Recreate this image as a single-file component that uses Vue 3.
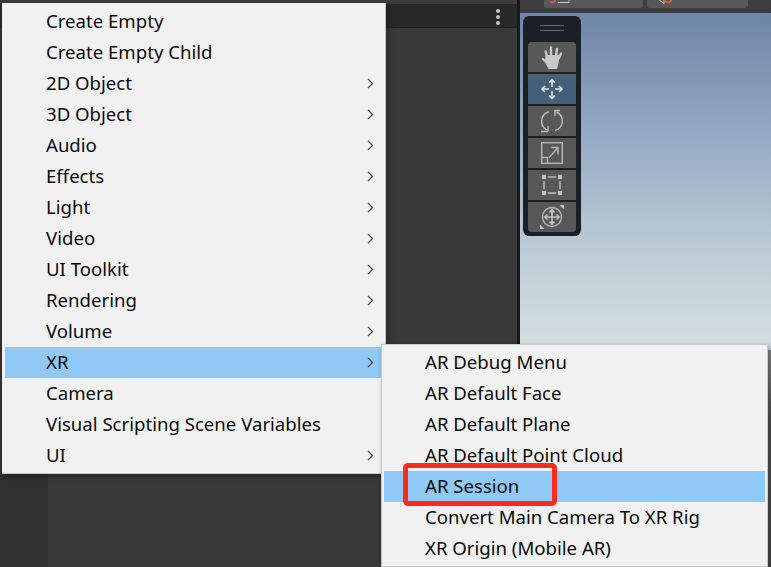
<template>
  <div class="editor">
    <!-- hierarchy panel behind the menu -->
    <div class="panel">
      <div class="panel-top"></div>
      <div class="panel-head">
        <span class="dots"><i></i><i></i><i></i></span>
      </div>
      <div class="panel-body"><div class="indent"></div></div>
    </div>

    <!-- scene view -->
    <div class="scene">
      <div class="scene-bar">
        <div class="bar-btn first">
          <svg width="24" height="5" viewBox="0 0 24 5"><circle cx="2" cy="-1" r="3.5" fill="none" stroke="#e8633a" stroke-width="1.6"/><path d="M8 2.5H19V-2" fill="none" stroke="#c8c8c8"/></svg>
        </div>
        <div class="bar-btn second">
          <svg width="28" height="5" viewBox="0 0 28 5"><path d="M3 -1L9 3.5V-1" fill="none" stroke="#c8c8c8"/><circle cx="13" cy="-1" r="3.5" fill="none" stroke="#e8633a" stroke-width="1.6"/></svg>
        </div>
      </div>
      <div class="scene-view">
        <div class="sky"></div>
        <div class="ground"></div>

        <div class="tools">
          <div class="grip"><i></i><i></i></div>
          <div v-for="(t, idx) in tools" :key="t" class="tool" :class="[{ active: t === 'move' }, idx === 0 ? 'top' : '', idx === tools.length - 1 ? 'last' : '']">
            <svg v-if="t === 'hand'" width="22" height="23" viewBox="0 0 22 23">
              <path d="M6 10L4.6 5.5M10 10V1.5M15 10L16 3M18 12L20 7.5M7 18L2 13" fill="none" stroke="#c9c9c9" stroke-width="2.4" stroke-linecap="round"/>
              <path d="M4.5 9H19L17.5 17L16 23H7.5L4 16Z" fill="#c9c9c9"/>
            </svg>
            <svg v-else-if="t === 'move'" width="24" height="24" viewBox="0 0 24 24" fill="none" stroke="#e6e9ec" stroke-width="1.5">
              <path d="M12 4V10M12 14V21M2 12H9M15 12H22"/>
              <path d="M9.2 5.8L12 2.8L14.8 5.8M9.2 18.6L12 21.6L14.8 18.6M5 9L2 12L5 15M19 9L22 12L19 15"/>
            </svg>
            <svg v-else-if="t === 'rotate'" width="24" height="24" viewBox="0 0 24 24" fill="none" stroke="#bdbdbd" stroke-width="1.4">
              <path d="M9 2.8A9.8 9.8 0 0 0 7 21"/>
              <path d="M15 21.4A9.8 9.8 0 0 0 16.5 3"/>
              <path d="M14 1.5H20M15 1.5V7M1 22.5H8M8 17V22.5"/>
            </svg>
            <svg v-else-if="t === 'scale'" width="24" height="24" viewBox="0 0 24 24" fill="none" stroke="#b4b4b4" stroke-width="1.4">
              <rect x="1.7" y="1.7" width="20.6" height="20.6"/>
              <path d="M1.7 16.5H7.5V22.3M9 16.7L18 6.5M11.5 6.5H18V13.5"/>
            </svg>
            <svg v-else-if="t === 'rect'" width="20" height="20" viewBox="0 0 20 20">
              <path d="M6 2H14M6 18H14M2 6V14M18 6V14" stroke="#bdbdbd" stroke-width="1.5" fill="none"/>
              <path d="M0 0H4V4H0ZM16 0H20V4H16ZM0 16H4V20H0ZM16 16H20V20H16Z" fill="#c4c4c4"/>
            </svg>
            <svg v-else width="24" height="24" viewBox="0 0 24 24" fill="none" stroke="#b9b9b9" stroke-width="1.3">
              <circle cx="12" cy="12" r="9.5"/>
              <path d="M12 5.5V18.5M5.5 12H18.5" stroke="#c4c4c4" stroke-width="1.6"/>
              <path d="M9.5 7.5L12 4.8L14.5 7.5M9.5 16.5L12 19.2L14.5 16.5M7.5 9.5L4.8 12L7.5 14.5M16.5 9.5L19.2 12L16.5 14.5" stroke="#c4c4c4" stroke-width="1.6"/>
              <path d="M19.5 0H24V4.5ZM0 19.5V24H4.5Z" fill="#c4c4c4" stroke="none"/>
            </svg>
          </div>
        </div>
      </div>
    </div>

    <!-- GameObject context menu -->
    <ul class="menu main-menu">
      <li v-for="item in mainItems" :key="item.label" class="item" :class="{ on: item.label === 'XR' }">
        <span>{{ item.label }}</span>
        <svg v-if="item.sub" class="chev" width="7" height="11" viewBox="0 0 7 11"><path d="M1 1L5.5 5.5L1 10" fill="none" stroke="#4a4a4a" stroke-width="1.3"/></svg>
      </li>
    </ul>

    <!-- XR submenu -->
    <ul class="menu sub-menu">
      <li v-for="label in subItems" :key="label" class="item" :class="{ on: label === 'AR Session' }">
        <span>{{ label }}</span>
        <div v-if="label === 'AR Session'" class="callout"></div>
      </li>
    </ul>
  </div>
</template>

<script setup>
const tools = ['hand', 'move', 'rotate', 'scale', 'rect', 'transform']

const mainItems = [
  { label: 'Create Empty' },
  { label: 'Create Empty Child' },
  { label: '2D Object', sub: true },
  { label: '3D Object', sub: true },
  { label: 'Audio', sub: true },
  { label: 'Effects', sub: true },
  { label: 'Light', sub: true },
  { label: 'Video', sub: true },
  { label: 'UI Toolkit', sub: true },
  { label: 'Rendering', sub: true },
  { label: 'Volume', sub: true },
  { label: 'XR', sub: true },
  { label: 'Camera' },
  { label: 'Visual Scripting Scene Variables' },
  { label: 'UI', sub: true }
]

const subItems = [
  'AR Debug Menu',
  'AR Default Face',
  'AR Default Plane',
  'AR Default Point Cloud',
  'AR Session',
  'Convert Main Camera To XR Rig',
  'XR Origin (Mobile AR)'
]
</script>

<style>
html, body { margin: 0; background: #383838; overflow: hidden; }
</style>

<style scoped>
.editor {
  position: relative;
  width: 771px;
  height: 567px;
  overflow: hidden;
  display: flex;
  background: #191919;
  font-family: "Noto Sans", "Open Sans", sans-serif;
}

/* left panel */
.panel {
  width: 517px;
  display: flex;
  flex-direction: column;
  background: #383838;
}
.panel-top { height: 4px; background: #3c3c3c; }
.panel-head {
  background: #282828;
  border-bottom: 1px solid #232323;
  display: flex;
  justify-content: flex-end;
  align-items: center;
  padding: 3px 17px 0 0;
  height: 20px;
}
.dots { display: flex; flex-direction: column; gap: 2px; }
.dots i { width: 4px; height: 4px; border-radius: 50%; background: #c4c4c4; display: block; }
.panel-body { flex: 1; display: flex; }
.indent { width: 48px; background: #303030; }

/* scene */
.scene {
  margin-left: 3px;
  flex: 1;
  display: flex;
  flex-direction: column;
}
.scene-bar {
  height: 13px;
  background: #3c3c3c;
  position: relative;
  display: flex;
  padding-left: 24px;
  gap: 4px;
}
.bar-btn {
  height: 8px;
  background: #575757;
  border-radius: 0 0 3px 3px;
  overflow: hidden;
}
.bar-btn.first { width: 99px; padding-left: 6px; box-sizing: border-box; }
.bar-btn.second { width: 101px; padding-left: 8px; box-sizing: border-box; }
.bar-btn svg { display: block; }

.scene-view {
  flex: 1;
  display: flex;
  flex-direction: column;
  position: relative;
}
.sky { height: 337px; background: linear-gradient(#6d85a7 0%, #93a9c2 35%, #bccbd6 70%, #d5e0e2 100%); }
.ground { flex: 1; background: linear-gradient(#8a8c8c, #555 30%, #4a4a4a); }

.tools {
  position: absolute;
  left: 3px;
  top: 3px;
  width: 58px;
  height: 220px;
  box-sizing: border-box;
  padding: 0 5px;
  border-radius: 6px;
  background: #1b2027;
  display: flex;
  flex-direction: column;
  gap: 2px;
}
.grip {
  height: 24px;
  flex: none;
  display: flex;
  flex-direction: column;
  align-items: center;
  justify-content: center;
  gap: 4px;
}
.grip i { width: 24px; height: 1px; background: #6a6e72; display: block; }
.tool {
  height: 30px;
  flex: none;
  background: #585858;
  display: flex;
  align-items: center;
  justify-content: center;
}
.tool.top { border-radius: 4px 4px 0 0; }
.tool.last { border-radius: 0 0 4px 4px; }
.tool.active { background: #46607c; }
.tool svg { display: block; }

/* menus */
.menu {
  position: absolute;
  margin: 0;
  padding: 3px;
  list-style: none;
  background: #f1f1f1;
  box-sizing: border-box;
  box-shadow: 2px 2px 5px rgba(0, 0, 0, .35);
  border: 1px solid #c9c9c9;
  border-width: 0 1px 1px 0;
}
.main-menu { left: 2px; top: 3px; width: 384px; height: 471px; }
.sub-menu { left: 381px; top: 344px; width: 387px; height: 223px; border-width: 1px; padding: 2px; }
.item {
  position: relative;
  height: 31px;
  display: flex;
  align-items: center;
  padding: 0 0 2px 41px;
  box-sizing: border-box;
  font-size: 18.6px;
  color: #0a0a0a;
  white-space: nowrap;
}
.item.on { background: #90c8f6; }
.chev { position: absolute; right: 8px; top: 10px; }
.callout {
  position: absolute;
  left: 19px;
  top: -8px;
  width: 154px;
  height: 43px;
  box-sizing: border-box;
  border: 5px solid #ff2a1a;
  border-radius: 5px;
}
</style>
